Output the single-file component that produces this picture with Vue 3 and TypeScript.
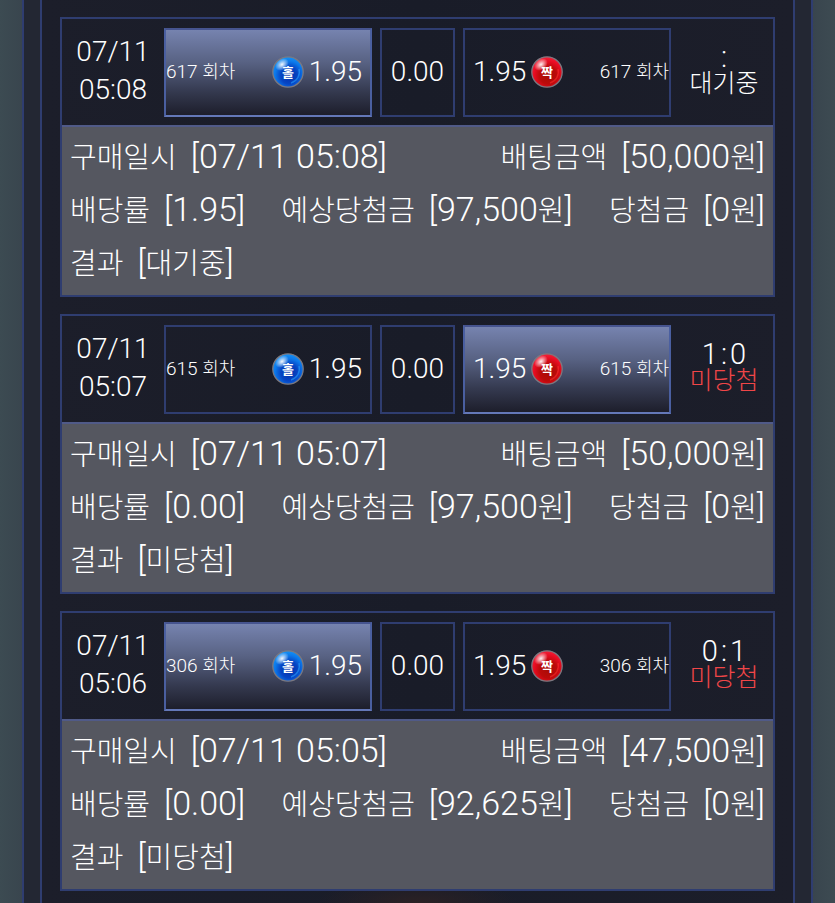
<script setup lang="ts">
import { h, type FunctionalComponent } from 'vue'

interface Bet {
  day: string
  time: string
  round: string
  picked: 'odd' | 'even'
  score: [string, string]
  status: string
  lost: boolean
  boughtAt: string
  stake: string
  rate: string
  expected: string
}

const bets: Bet[] = [
  { day: '07/11', time: '05:08', round: '617', picked: 'odd', score: ['', ''], status: '대기중', lost: false, boughtAt: '07/11 05:08', stake: '50,000원', rate: '1.95', expected: '97,500원' },
  { day: '07/11', time: '05:07', round: '615', picked: 'even', score: ['1', '0'], status: '미당첨', lost: true, boughtAt: '07/11 05:07', stake: '50,000원', rate: '0.00', expected: '97,500원' },
  { day: '07/11', time: '05:06', round: '306', picked: 'odd', score: ['0', '1'], status: '미당첨', lost: true, boughtAt: '07/11 05:05', stake: '47,500원', rate: '0.00', expected: '92,625원' },
]

const rowsOf = (b: Bet): [string, string][][] => [
  [['구매일시', b.boughtAt], ['배팅금액', b.stake]],
  [['배당률', b.rate], ['예상당첨금', b.expected], ['당첨금', '0원']],
  [['결과', b.status]],
]

// Hangul runs are set a little smaller than the figures around them.
const Mixed: FunctionalComponent<{ text: string }> = (props) =>
  props.text
    .split(/([가-힣]+)/)
    .filter((part) => part !== '')
    .map((part) => h('span', { class: /[가-힣]/.test(part) ? 'ko' : 'num' }, part))
Mixed.props = ['text']

const Ball: FunctionalComponent<{ kind: string }> = (props) => {
  const odd = props.kind === 'odd'
  const id = 'ball-' + props.kind
  const stops = odd
    ? ['#0430a8', '#0645c4', '#0c78ea', '#1593f5']
    : ['#a80c06', '#bc0a0a', '#e80c22', '#f2223a']
  return h('svg', { class: 'ball', viewBox: '0 0 32 32' }, [
    h('defs', [
      h('radialGradient', { id, cx: 0.54, cy: 0.62, r: 0.62 }, [
        h('stop', { offset: '0', 'stop-color': stops[0] }),
        h('stop', { offset: '.45', 'stop-color': stops[1] }),
        h('stop', { offset: '.75', 'stop-color': stops[2] }),
        h('stop', { offset: '1', 'stop-color': stops[3] }),
      ]),
      h('radialGradient', { id: id + '-shine' }, [
        h('stop', { offset: '0', 'stop-color': '#fff', 'stop-opacity': '.95' }),
        h('stop', { offset: '1', 'stop-color': '#fff', 'stop-opacity': '0' }),
      ]),
    ]),
    h('circle', { cx: 16, cy: 16, r: 15.2, fill: `url(#${id})`, stroke: '#7b7880', 'stroke-width': 1.3 }),
    h('ellipse', { cx: 10, cy: 8.5, rx: 7.5, ry: 5.5, fill: `url(#${id}-shine)`, transform: 'rotate(-38 10 8.5)' }),
    h('path', { d: 'M27 13 A11.5 11.5 0 0 1 19 27', fill: 'none', stroke: odd ? '#2aa6ff' : '#ff3030', 'stroke-width': 1.4, opacity: 0.55 }),
    h('text', { x: 16, y: 20.5, 'text-anchor': 'middle', class: 'ball-text' }, odd ? '홀' : '짝'),
  ])
}
Ball.props = ['kind']
</script>

<template>
  <div class="page">
    <div class="frame">
      <main class="list">
        <article v-for="b in bets" :key="b.round" class="card">
          <header class="head">
            <time class="date">
              <span>{{ b.day }}</span>
              <span>{{ b.time }}</span>
            </time>
            <div class="pick home" :class="{ on: b.picked === 'odd' }">
              <span class="round"><Mixed :text="b.round + ' 회차'" /></span>
              <span class="odds"><Ball kind="odd" />1.95</span>
            </div>
            <div class="pick draw">0.00</div>
            <div class="pick away" :class="{ on: b.picked === 'even' }">
              <span class="odds">1.95<Ball kind="even" /></span>
              <span class="round"><Mixed :text="b.round + ' 회차'" /></span>
            </div>
            <div class="state">
              <span class="score">
                <span v-if="b.score[0]">{{ b.score[0] }}</span>
                <span>:</span>
                <span v-if="b.score[1]">{{ b.score[1] }}</span>
              </span>
              <span class="status" :class="{ lost: b.lost }">{{ b.status }}</span>
            </div>
          </header>
          <div class="details">
            <dl v-for="(row, i) in rowsOf(b)" :key="i" class="row">
              <div v-for="[label, value] in row" :key="label" class="item">
                <dt><Mixed :text="label" /></dt>
                <dd><Mixed :text="'[' + value + ']'" /></dd>
              </div>
            </dl>
          </div>
        </article>
      </main>
    </div>
  </div>
</template>

<style>
body {
  background: #3b474f;
}
</style>

<style scoped>
.page {
  box-sizing: border-box;
  min-height: 100vh;
  padding: 0 22px;
  display: flex;
  background: linear-gradient(90deg, #3c4b52, #39454e 22px, #39454e calc(100% - 22px), #3d4b52);
  font-family: Roboto, "Noto Sans CJK KR", sans-serif;
  font-weight: 300;
  color: #fff;
}
.frame {
  flex: 1;
  display: flex;
  padding: 0 16px;
  border: solid #2f3d70;
  border-width: 0 2px;
  background: #232733;
}
.list {
  flex: 1;
  display: flex;
  flex-direction: column;
  gap: 17px;
  padding: 17px 18px 12px;
  border: solid #2f3d70;
  border-width: 0 2px;
  background:
    radial-gradient(ellipse 100px 24px at 50% 100%, #2b2124, #2b212400),
    linear-gradient(90deg, #1c1e2a, #191c28 50%, #1c1e2a);
}
.card {
  border: 2px solid #2f3d70;
}
.head {
  display: grid;
  grid-template-columns: 94fr 208fr 75fr 208fr 94fr;
  column-gap: 8px;
  padding: 9px 0 8px;
}
.date {
  display: flex;
  flex-direction: column;
  align-items: center;
  padding: 5px 0 0 8px;
  font-size: 28px;
  line-height: 38px;
}
.pick {
  box-sizing: border-box;
  height: 89px;
  display: flex;
  align-items: center;
  justify-content: space-between;
  padding-bottom: 2px;
  border: 2px solid #2f3d70;
  font-size: 28px;
  white-space: nowrap;
}
.pick.on {
  border-color: #46548f #4a5fa0 #6478b8;
  background: linear-gradient(#7683af, #586283 38%, #353a50 72%, #1d1e2b);
}
.home .odds {
  padding-right: 8px;
}
.away .odds {
  padding-left: 8px;
}
.draw {
  justify-content: center;
}
.odds {
  display: flex;
  align-items: center;
  gap: 5px;
}
.round {
  font-size: 19px;
}
.round :deep(.ko) {
  font-size: 18px;
  line-height: 1;
}
:deep(.num) {
  white-space: pre;
}
.ball {
  width: 32px;
  height: 32px;
}
:deep(.ball-text) {
  font: 700 13px "Noto Sans CJK KR", sans-serif;
  fill: #fff;
}
.state {
  display: flex;
  flex-direction: column;
  align-items: center;
  padding: 16px 4px 0 0;
}
.score {
  display: flex;
  gap: 3px;
  font-size: 29px;
  line-height: 26px;
}
.status {
  font-size: 25px;
  line-height: 28px;
}
.status.lost {
  color: #f04648;
}
.details {
  padding: 3px 8px 6px;
  border-top: 2px solid #505a88;
  background: #555760;
}
.row {
  display: flex;
  justify-content: space-between;
  margin: 0;
  font-size: 34px;
  line-height: 53px;
  white-space: nowrap;
}
.item {
  display: flex;
  gap: 14px;
}
.item dd {
  margin: 0;
}
.item :deep(.ko) {
  font-size: 29px;
  line-height: 1;
}
</style>
